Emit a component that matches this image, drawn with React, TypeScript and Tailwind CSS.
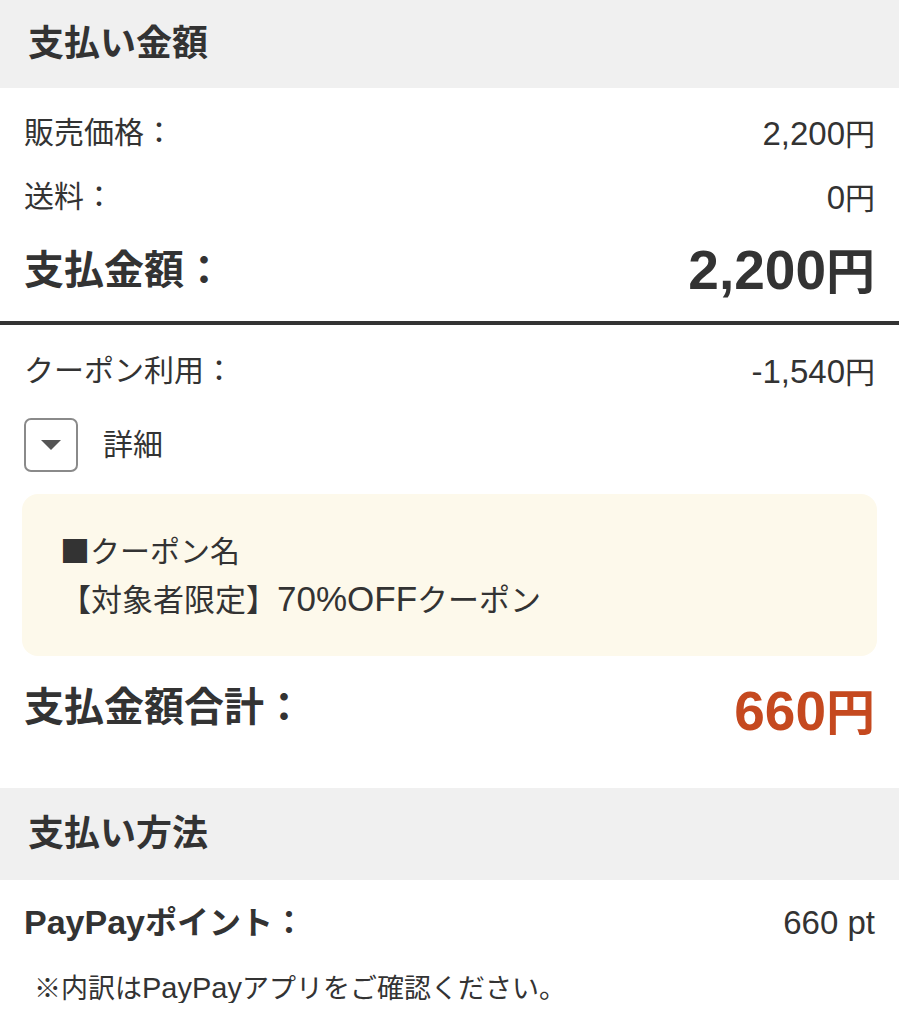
const FONT = "font-['Liberation_Sans','Noto_Sans_CJK_JP',sans-serif]";

function SectionHeader({ title }: { title: string }) {
  return (
    <div className="flex h-[92px] items-center bg-[#f0f0f0] px-[28px]">
      <h2 className="text-[36px] font-bold leading-none">{title}</h2>
    </div>
  );
}

// digits render a bit larger than the kana, like the Hiragino latin on device
function Yen({ amount }: { amount: string }) {
  return (
    <span className="leading-none">
      <span className="text-[33px]">{amount}</span>
      <span className="text-[30px]">円</span>
    </span>
  );
}

function Row({ label, amount }: { label: string; amount: string }) {
  return (
    <div className="flex h-[64px] items-center justify-between">
      <span className="text-[30px] leading-none">{label}</span>
      <Yen amount={amount} />
    </div>
  );
}

export default function App() {
  return (
    <div className={`${FONT} w-[899px] bg-white text-[#333]`}>
      <div className="flex h-[88px] items-center bg-[#f0f0f0] px-[28px]">
        <h2 className="text-[36px] font-bold leading-none">支払い金額</h2>
      </div>

      <div className="px-[24px] pt-[13px]">
        <Row label="販売価格：" amount="2,200" />
        <Row label="送料：" amount="0" />
        <div className="flex h-[82px] items-center justify-between">
          <span className="text-[40px] font-bold leading-none">支払金額：</span>
          <span className="font-bold leading-none">
            <span className="text-[55px]">2,200</span>
            <span className="text-[49px]">円</span>
          </span>
        </div>
      </div>

      <div className="mt-[10px] h-[4px] bg-[#333]" />

      <div className="px-[24px] pt-[14px]">
        <Row label="クーポン利用：" amount="-1,540" />
        <div className="mt-[15px] flex items-center gap-[25px]">
          <button
            type="button"
            className="flex h-[54px] w-[54px] items-center justify-center rounded-[7px] border-2 border-[#8a8a8a] bg-white"
            aria-label="詳細"
          >
            <svg width="20" height="10" viewBox="0 0 20 10">
              <path d="M0 0 H20 L10 10 Z" fill="#555" />
            </svg>
          </button>
          <span className="text-[30px] leading-none">詳細</span>
        </div>
      </div>

      <div className="mx-[22px] mt-[22px] flex h-[162px] flex-col justify-center gap-[14px] rounded-[16px] bg-[#fdf9eb] px-[38px]">
        <p className="text-[30px] leading-none">
          <span className="font-['Noto_Sans_CJK_JP',sans-serif]">■</span>クーポン名
        </p>
        <p className="text-[31px] leading-none">
          【対象者限定】<span className="text-[35px]">70%OFF</span>クーポン
        </p>
      </div>

      <div className="flex h-[106px] items-center justify-between px-[24px] pb-[4px]">
        <span className="text-[40px] font-bold leading-none">支払金額合計：</span>
        <span className="mt-[8px] font-bold leading-none text-[#c5491f]">
          <span className="text-[55px]">660</span>
          <span className="text-[49px]">円</span>
        </span>
      </div>

      <div className="mt-[26px]">
        <SectionHeader title="支払い方法" />
      </div>

      <div className="px-[24px]">
        <div className="flex h-[84px] items-center justify-between">
          <span className="text-[32px] font-bold leading-none">
            <span className="text-[34px]">PayPay</span>ポイント：
          </span>
          <span className="text-[33px] leading-none">660 pt</span>
        </div>
        <p className="pl-[10px] pt-[10px] text-[27px] leading-none">
          ※内訳は<span className="text-[29px]">PayPay</span>アプリをご確認ください。
        </p>
      </div>
    </div>
  );
}
